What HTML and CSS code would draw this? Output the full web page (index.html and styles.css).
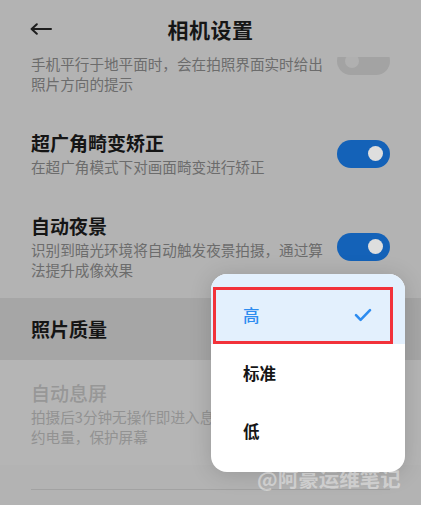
FILE: index.html
```html
<!DOCTYPE html>
<html lang="zh-CN">
<head>
<meta charset="utf-8">
<title>相机设置</title>
<link rel="stylesheet" href="styles.css">
</head>
<body>
<div class="screen">
  <header class="header">
    <div class="back">
      <svg width="22" height="12" viewBox="0 0 22 12" aria-hidden="true">
        <path d="M21 6H2.2M6.8 1.2L1.6 6l5.2 4.8" fill="none" stroke="#1e1e1e" stroke-width="2" stroke-linecap="round" stroke-linejoin="round"/>
      </svg>
    </div>
    <h1 class="page-title">相机设置</h1>
    <div></div>
  </header>

  <div class="list">
    <div class="row">
      <div class="text">
        <div class="title">水平仪</div>
        <div class="desc">手机平行于地平面时，会在拍照界面实时给出照片方向的提示</div>
      </div>
      <div class="toggle off"><span class="knob"></span></div>
    </div>

    <div class="row">
      <div class="text">
        <div class="title">超广角畸变矫正</div>
        <div class="desc">在超广角模式下对画面畸变进行矫正</div>
      </div>
      <div class="toggle on"><span class="knob"></span></div>
    </div>

    <div class="row">
      <div class="text">
        <div class="title">自动夜景</div>
        <div class="desc">识别到暗光环境将自动触发夜景拍摄，通过算法提升成像效果</div>
      </div>
      <div class="toggle on"><span class="knob"></span></div>
    </div>

    <div class="row band">
      <div class="text">
        <div class="title">照片质量</div>
      </div>
    </div>

    <div class="row disabled">
      <div class="text">
        <div class="title">自动息屏</div>
        <div class="desc">拍摄后3分钟无操作即进入息屏状态，以节<br>约电量，保护屏幕</div>
      </div>
    </div>

    <div class="divider"></div>
  </div>

  <div class="popup">
    <div class="option selected">
      <span>高</span>
      <svg class="check" width="18" height="14" viewBox="0 0 18 14" aria-hidden="true">
        <path d="M2 7.2l4.6 4.6L16 2.2" fill="none" stroke="#2d8cf0" stroke-width="2.6" stroke-linecap="round" stroke-linejoin="round"/>
      </svg>
    </div>
    <div class="option">标准</div>
    <div class="option">低</div>
    <div class="mark"></div>
  </div>

  <div class="watermark">@阿豪运维笔记</div>
</div>
</body>
</html>
```

FILE: styles.css
```css
* { box-sizing: border-box; }

html, body {
  margin: 0;
  padding: 0;
}

body {
  background: #b3b3b3;
  font-family: "Noto Sans CJK SC", "Noto Sans", sans-serif;
  color: #161616;
}

.screen {
  position: relative;
  width: 421px;
  height: 505px;
  overflow: hidden;
  background: #b3b3b3;
}

.header {
  position: relative;
  z-index: 2;
  height: 57px;
  display: grid;
  grid-template-columns: 1fr auto 1fr;
  align-items: center;
  background: #b3b3b3;
}

.back {
  padding-left: 30px;
  display: flex;
  align-items: center;
  padding-top: 1px;
}

.page-title {
  margin: 0;
  font-size: 21px;
  font-weight: 700;
  line-height: 28px;
  color: #161616;
  letter-spacing: 0.5px;
}

.list {
  margin-top: -48px;
}

.row {
  display: flex;
  align-items: center;
  gap: 12px;
  padding: 18px 31px;
}

.text {
  flex: 1;
  min-width: 0;
}

.title {
  font-size: 19px;
  line-height: 26px;
  font-weight: 700;
  color: #151515;
}

.desc {
  margin-top: 1px;
  font-size: 14.6px;
  line-height: 20px;
  color: #6c6c6c;
}

.toggle {
  flex: none;
  width: 53px;
  height: 28px;
  border-radius: 14px;
  display: flex;
  align-items: center;
  padding: 0 7px;
}

.toggle .knob {
  width: 15px;
  height: 15px;
  border-radius: 50%;
}

.toggle.on {
  background: #1462b8;
  justify-content: flex-end;
}

.toggle.on .knob {
  background: #dedede;
}

.toggle.off {
  background: #a3a3a3;
  justify-content: flex-start;
}

.toggle.off .knob {
  background: #b0b0b0;
  width: 14px;
  height: 14px;
  margin-left: 1px;
}

.band {
  background: #a6a6a6;
}

.disabled {
  background: #b5b5b5;
  padding-top: 20px;
}

.disabled .title {
  color: #979797;
  font-weight: 500;
}

.disabled .desc {
  color: #929292;
}

.divider {
  height: 1px;
  margin: 24px 31px 0;
  background: #a2a2a2;
}

.popup {
  position: absolute;
  left: 211px;
  top: 274px;
  width: 194px;
  height: 198px;
  background: #ffffff;
  border-radius: 16px;
  overflow: hidden;
  box-shadow: 0 2px 22px rgba(0, 0, 0, 0.16);
  padding-bottom: 12px;
  z-index: 3;
}

.option {
  height: 58px;
  display: flex;
  align-items: center;
  justify-content: space-between;
  padding: 0 33px 0 32px;
  font-size: 16.5px;
  font-weight: 700;
  color: #151515;
}

.option.selected {
  height: 70px;
  padding-top: 12px;
  background: #e3f0fd;
  color: #2d8cf0;
  font-weight: 500;
}

.check {
  display: block;
}

.mark {
  position: absolute;
  left: 2px;
  top: 13px;
  width: 180px;
  height: 57px;
  border: 3px solid #f2323a;
}

.watermark {
  position: absolute;
  left: 257px;
  top: 464px;
  z-index: 4;
  font-size: 20.5px;
  line-height: 28px;
  font-weight: 700;
  color: rgba(255, 255, 255, 0.42);
  white-space: nowrap;
}
```
